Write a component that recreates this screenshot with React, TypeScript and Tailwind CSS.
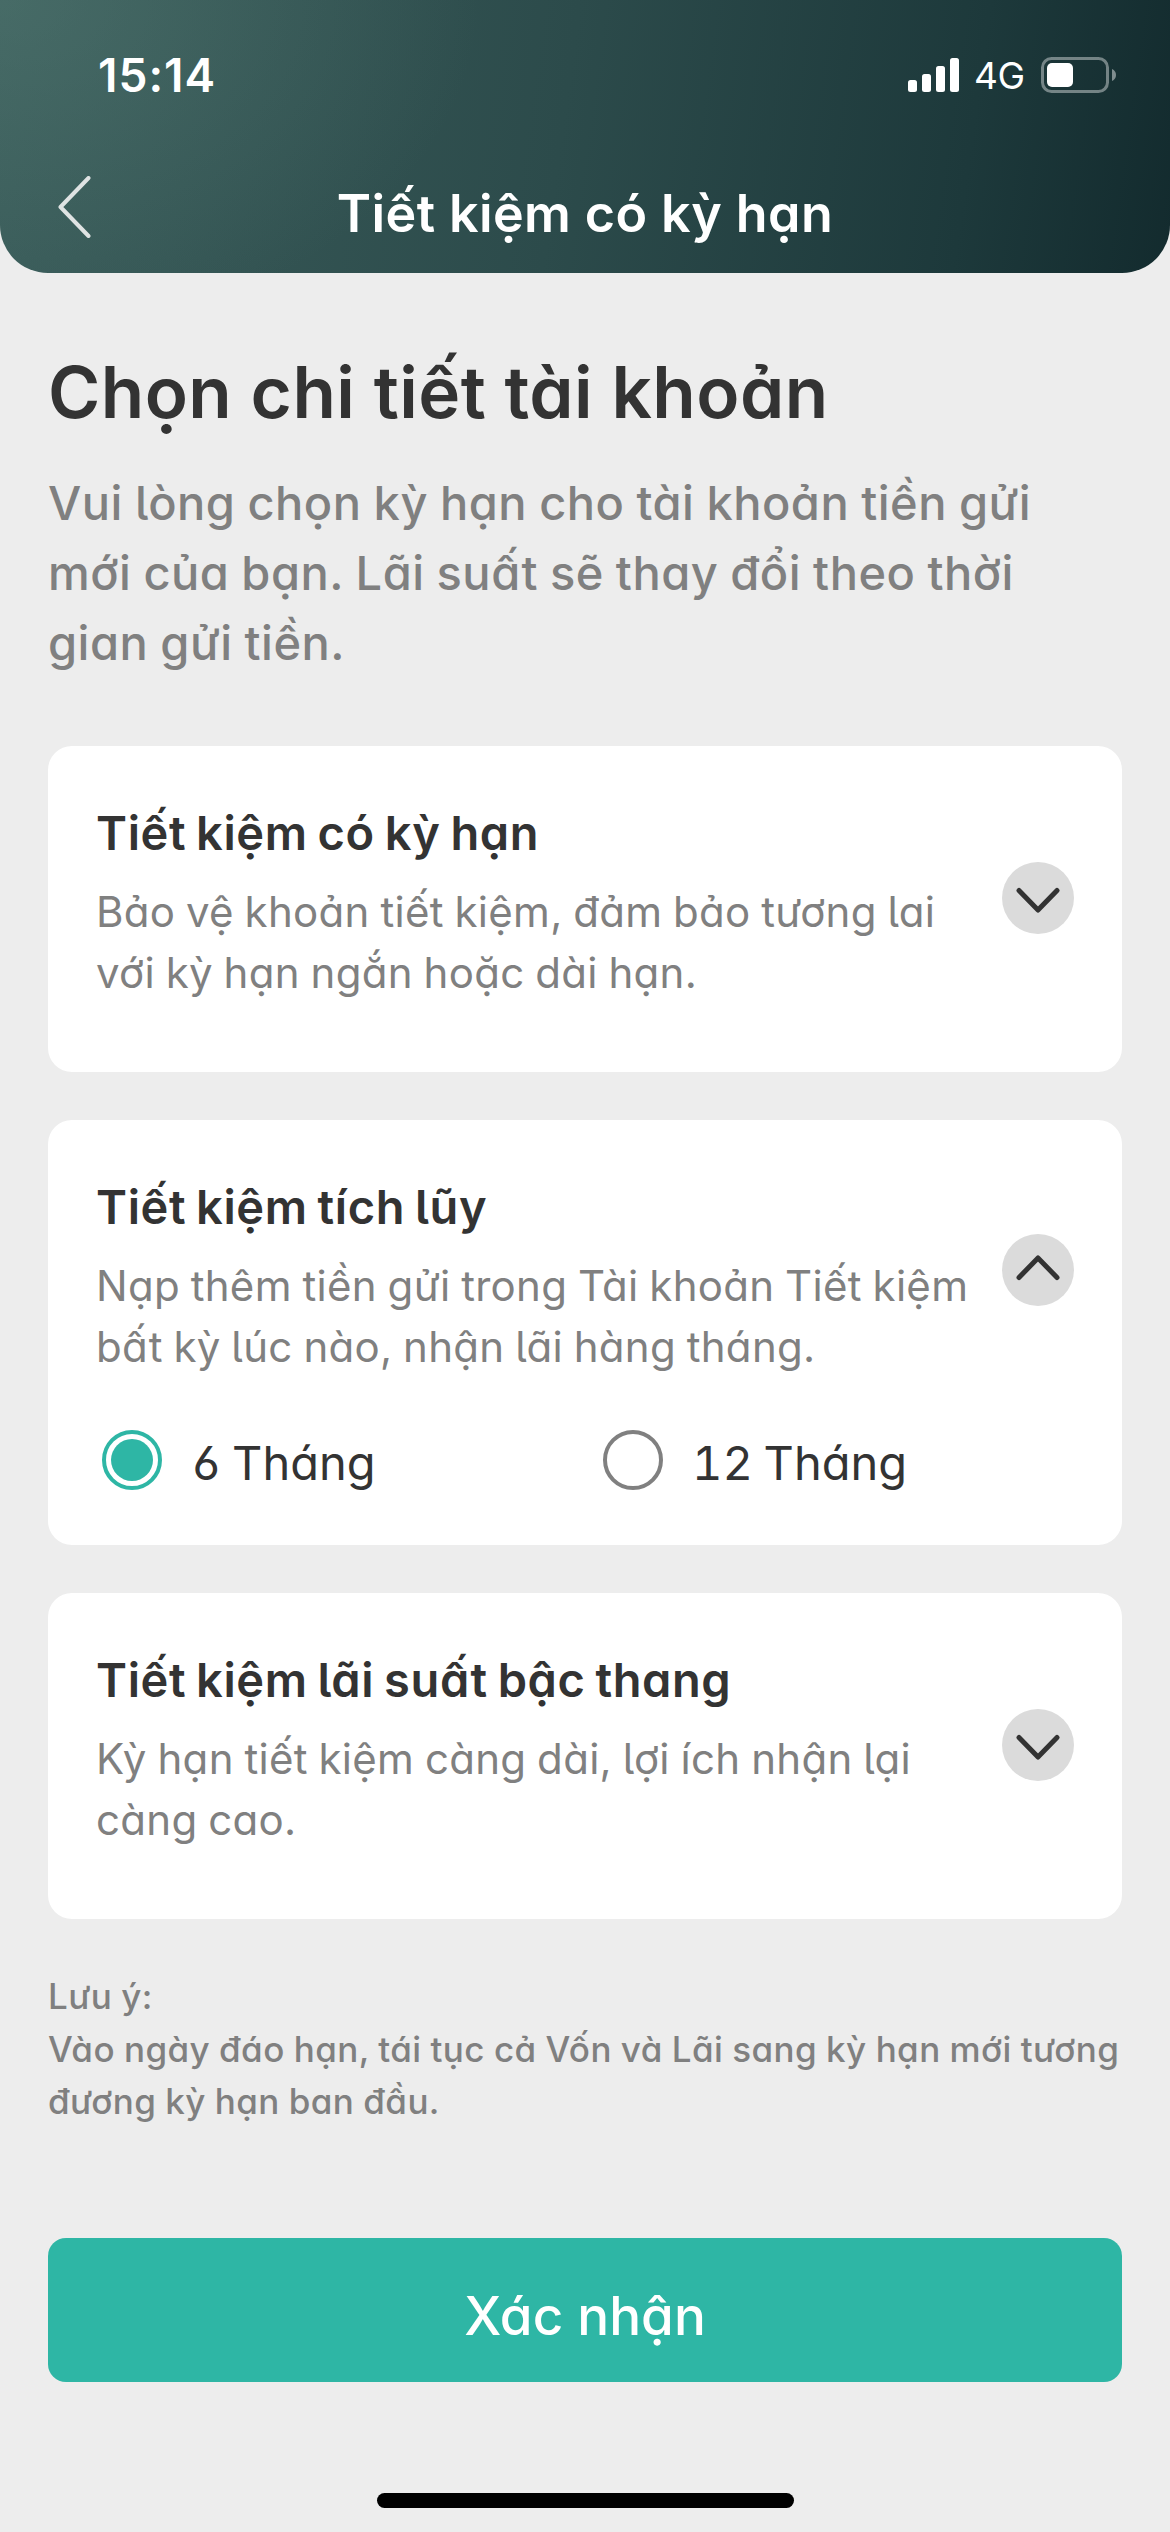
import { useState } from 'react';

type Plan = {
  title: string;
  lines: string[];
  terms?: string[];
};

const plans: Plan[] = [
  {
    title: 'Tiết kiệm có kỳ hạn',
    lines: ['Bảo vệ khoản tiết kiệm, đảm bảo tương lai', 'với kỳ hạn ngắn hoặc dài hạn.'],
  },
  {
    title: 'Tiết kiệm tích lũy',
    lines: ['Nạp thêm tiền gửi trong Tài khoản Tiết kiệm', 'bất kỳ lúc nào, nhận lãi hàng tháng.'],
    terms: ['6 Tháng', '12 Tháng'],
  },
  {
    title: 'Tiết kiệm lãi suất bậc thang',
    lines: ['Kỳ hạn tiết kiệm càng dài, lợi ích nhận lại', 'càng cao.'],
  },
];

function Lines({ lines }: { lines: string[] }) {
  return (
    <>
      {lines.map((line) => (
        <span key={line} className="block whitespace-nowrap">
          {line}
        </span>
      ))}
    </>
  );
}

function StatusBar() {
  return (
    <div className="flex h-[149px] items-center pl-[98px] pr-[54px] text-white">
      <span className="flex-1 text-[46px] leading-none font-semibold tracking-[1px]">15:14</span>
      <svg width="51" height="34" viewBox="0 0 51 34" fill="currentColor">
        <rect x="0" y="22" width="9" height="12" rx="2.5" />
        <rect x="14" y="16" width="9" height="18" rx="2.5" />
        <rect x="28" y="8" width="9" height="26" rx="2.5" />
        <rect x="42" y="0" width="9" height="34" rx="2.5" />
      </svg>
      <span className="ml-[15px] w-[67px] pt-0.5 text-[37px] leading-none tracking-[-0.5px]">4G</span>
      <svg width="75" height="36" viewBox="0 0 75 36" fill="none">
        <rect x="1.5" y="1.5" width="65" height="33" rx="9" stroke="white" strokeOpacity="0.4" strokeWidth="3" />
        <rect x="6" y="6" width="26" height="24" rx="5" fill="white" />
        <path d="M71 12c2.600 1 4 3.400 4 6s-1.400 5-4 6z" fill="white" fillOpacity="0.45" />
      </svg>
    </div>
  );
}

function Chevron({ open }: { open: boolean }) {
  return (
    <span className="flex size-[72px] items-center justify-center rounded-full bg-[#dbdbdb]">
      <svg
        width="44"
        height="28"
        viewBox="0 0 44 28"
        fill="none"
        stroke="#333333"
        strokeWidth="5"
        strokeLinecap="round"
        strokeLinejoin="round"
        className={open ? 'mb-1' : 'mt-1 rotate-180'}
      >
        <path d="M3 23.500 22 4l19 19.500" />
      </svg>
    </span>
  );
}

function PlanCard({ plan, term, onTerm }: { plan: Plan; term: string; onTerm: (t: string) => void }) {
  const open = Boolean(plan.terms);

  return (
    <section className={`rounded-3xl bg-white px-12 pt-[57px] ${open ? 'h-[425px]' : 'h-[326px]'}`}>
      <div className="flex justify-between">
        <div>
          <h2 className="text-[47px] leading-[60px] font-semibold tracking-[0.6px] text-[#333333] [word-spacing:-2.5px]">
            {plan.title}
          </h2>
          <p className="mt-[18px] text-[42px] leading-[61px] tracking-[0.3px] text-[#808080] [word-spacing:-1.4px]">
            <Lines lines={plan.lines} />
          </p>
        </div>
        <button type="button" className={`size-[72px] ${open ? 'mt-[57px]' : 'mt-[59px]'}`}>
          <Chevron open={open} />
        </button>
      </div>

      {plan.terms && (
        <div className="mt-[53px] grid grid-cols-[501px_1fr] pl-1.5">
          {plan.terms.map((t) => (
            <button key={t} type="button" onClick={() => onTerm(t)} className="flex h-[60px] items-center gap-[29px]">
              <span
                className={`flex size-[60px] items-center justify-center rounded-full border-4 ${
                  t === term ? 'border-[#2eb6a5]' : 'border-[#808080]'
                }`}
              >
                {t === term && <span className="size-[42px] rounded-full bg-[#2eb6a5]" />}
              </span>
              <span className="pt-1.5 text-[47px] leading-[52px] text-[#333333] [font-feature-settings:'cv11','cv05','cv03','tnum'] [word-spacing:-2px]">
                {t}
              </span>
            </button>
          ))}
        </div>
      )}
    </section>
  );
}

export default function App() {
  const [term, setTerm] = useState('6 Tháng');

  return (
    <div className="flex min-h-[2532px] w-[1170px] flex-col bg-[#ededed] font-['Inter',sans-serif] [font-feature-settings:'cv11','cv05']">
      <header className="h-[273px] rounded-b-[48px] bg-[radial-gradient(480px_340px_at_0_0,rgba(90,130,122,0.4),transparent),linear-gradient(98deg,#3a5c5a_0%,#2c4b4b_48%,#1d393b_82%,#132b2e_100%)]">
        <StatusBar />
        <div className="flex h-[124px] items-center">
          <button type="button" className="-mt-2 w-[130px] pl-[57px]">
            <svg
              width="34"
              height="62"
              viewBox="0 0 34 62"
              fill="none"
              stroke="#dfe3e3"
              strokeWidth="4"
              strokeLinecap="round"
              strokeLinejoin="round"
            >
              <path d="M31.500 2 3.500 31l28 29" />
            </svg>
          </button>
          <h1 className="flex-1 pt-1.5 pr-[130px] text-center text-[52px] leading-[60px] font-semibold tracking-[0.4px] text-white">
            Tiết kiệm có kỳ hạn
          </h1>
        </div>
      </header>

      <main className="px-12 pt-[77px]">
        <h2 className="text-[71px] leading-[84px] font-semibold tracking-[0.45px] text-[#333333]">
          Chọn chi tiết tài khoản
        </h2>
        <p className="mt-[34px] text-[47px] leading-[70px] font-medium tracking-[0.5px] text-[#808080] [word-spacing:-1px]">
          <Lines
            lines={[
              'Vui lòng chọn kỳ hạn cho tài khoản tiền gửi',
              'mới của bạn. Lãi suất sẽ thay đổi theo thời',
              'gian gửi tiền.',
            ]}
          />
        </p>

        <div className="mt-[68px] flex flex-col gap-12">
          {plans.map((plan) => (
            <PlanCard key={plan.title} plan={plan} term={term} onTerm={setTerm} />
          ))}
        </div>

        <p className="mt-[51px] text-[35px] leading-[52.500px] font-medium tracking-[0.42px] text-[#808080] [word-spacing:-0.8px]">
          <Lines
            lines={[
              'Lưu ý:',
              'Vào ngày đáo hạn, tái tục cả Vốn và Lãi sang kỳ hạn mới tương',
              'đương kỳ hạn ban đầu.',
            ]}
          />
        </p>

        <button
          type="button"
          className="mt-[110px] h-36 w-full rounded-[18px] bg-[#2eb6a5] pt-3 text-[53px] leading-[60px] font-medium text-white"
        >
          Xác nhận
        </button>
      </main>

      <div className="mx-auto mt-[111px] h-[15px] w-[417px] rounded-full bg-black" />
    </div>
  );
}
